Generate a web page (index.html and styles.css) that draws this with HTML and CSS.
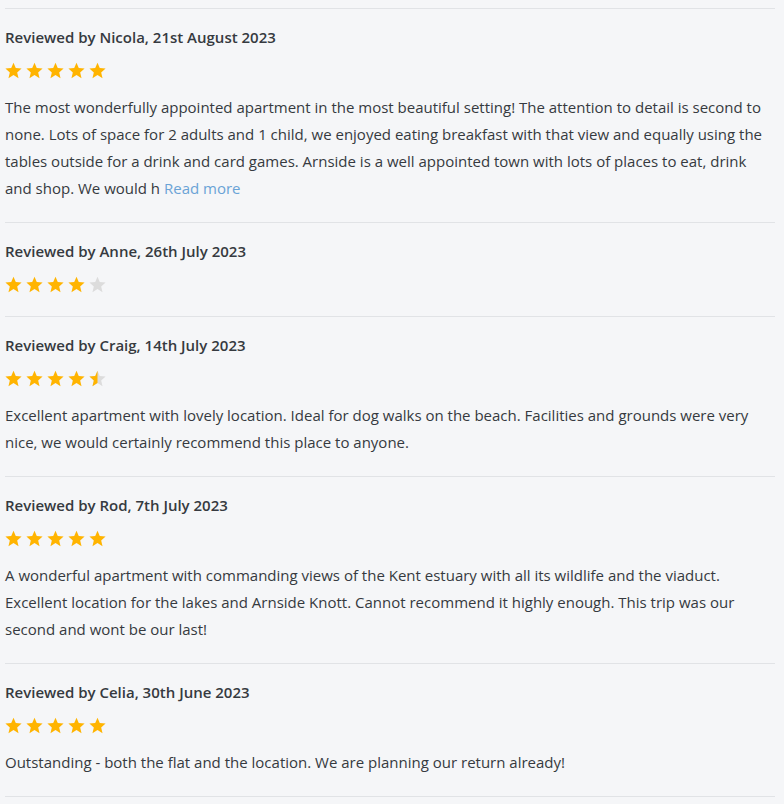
FILE: index.html
```html
<!DOCTYPE html>
<html lang="en">
<head>
<meta charset="utf-8">
<title>Reviews</title>
<link rel="stylesheet" href="styles.css">
</head>
<body>
<svg width="0" height="0" class="defs" aria-hidden="true">
  <defs>
    <symbol id="star" viewBox="0 0 24 24"><polygon points="12,1 15.2,8.6 23.4,9.3 17.2,14.7 19.1,22.8 12,18.5 4.9,22.8 6.8,14.7 0.6,9.3 8.8,8.6"/></symbol>
  </defs>
</svg>
<div class="reviews">
  <div class="review">
    <div class="title">Reviewed by Nicola, 21st August 2023</div>
    <div class="stars">
      <svg class="star on"><use href="#star"/></svg><svg class="star on"><use href="#star"/></svg><svg class="star on"><use href="#star"/></svg><svg class="star on"><use href="#star"/></svg><svg class="star on"><use href="#star"/></svg>
    </div>
    <p class="text">The most wonderfully appointed apartment in the most beautiful setting! The attention to detail is second to none. Lots of space for 2 adults and 1 child, we enjoyed eating breakfast with that view and equally using the tables outside for a drink and card games. Arnside is a well appointed town with lots of places to eat, drink and shop. We would h <a class="more" href="#">Read more</a></p>
  </div>
  <div class="review">
    <div class="title">Reviewed by Anne, 26th July 2023</div>
    <div class="stars">
      <svg class="star on"><use href="#star"/></svg><svg class="star on"><use href="#star"/></svg><svg class="star on"><use href="#star"/></svg><svg class="star on"><use href="#star"/></svg><svg class="star off"><use href="#star"/></svg>
    </div>
  </div>
  <div class="review">
    <div class="title">Reviewed by Craig, 14th July 2023</div>
    <div class="stars">
      <svg class="star on"><use href="#star"/></svg><svg class="star on"><use href="#star"/></svg><svg class="star on"><use href="#star"/></svg><svg class="star on"><use href="#star"/></svg><svg class="star half" viewBox="0 0 24 24"><defs><clipPath id="lefthalf"><rect x="0" y="0" width="12" height="24"/></clipPath></defs><use href="#star" class="half-bg"/><use href="#star" class="half-fg" clip-path="url(#lefthalf)"/></svg>
    </div>
    <p class="text">Excellent apartment with lovely location. Ideal for dog walks on the beach. Facilities and grounds were very nice, we would certainly recommend this place to anyone.</p>
  </div>
  <div class="review">
    <div class="title">Reviewed by Rod, 7th July 2023</div>
    <div class="stars">
      <svg class="star on"><use href="#star"/></svg><svg class="star on"><use href="#star"/></svg><svg class="star on"><use href="#star"/></svg><svg class="star on"><use href="#star"/></svg><svg class="star on"><use href="#star"/></svg>
    </div>
    <p class="text">A wonderful apartment with commanding views of the Kent estuary with all its wildlife and the viaduct. Excellent location for the lakes and Arnside Knott. Cannot recommend it highly enough. This trip was our second and wont be our last!</p>
  </div>
  <div class="review">
    <div class="title">Reviewed by Celia, 30th June 2023</div>
    <div class="stars">
      <svg class="star on"><use href="#star"/></svg><svg class="star on"><use href="#star"/></svg><svg class="star on"><use href="#star"/></svg><svg class="star on"><use href="#star"/></svg><svg class="star on"><use href="#star"/></svg>
    </div>
    <p class="text">Outstanding - both the flat and the location. We are planning our return already!</p>
  </div>
  <div class="end"></div>
</div>
</body>
</html>
```
FILE: styles.css
```css
html, body {
  margin: 0;
  padding: 0;
  background: #f5f6f8;
}
body {
  font-family: "Open Sans", "Noto Sans", sans-serif;
  color: #363a40;
}
.defs {
  position: absolute;
  width: 0;
  height: 0;
  overflow: hidden;
}
.reviews {
  padding-top: 8px;
  margin: 0 9px 0 5px;
}
.review {
  border-top: 1px solid #e1e3e6;
  padding: 17px 0 20px;
}
.end {
  border-top: 1px solid #e1e3e6;
}
.title {
  font-size: 15px;
  font-weight: 600;
  line-height: 22px;
  margin-bottom: 12px;
}
.stars {
  display: flex;
  gap: 4px;
  height: 20px;
  align-items: center;
  margin-bottom: 2px;
}
.star {
  width: 17px;
  height: 17px;
  display: block;
}
.star.on { fill: #ffb400; }
.star.off { fill: #dcdcdc; }
.half-bg { fill: #dcdcdc; }
.half-fg { fill: #ffb400; }
.text {
  margin: 14px 0 0;
  font-size: 15px;
  line-height: 27px;
}
.more {
  color: #6aa3d6;
  text-decoration: none;
}
```
